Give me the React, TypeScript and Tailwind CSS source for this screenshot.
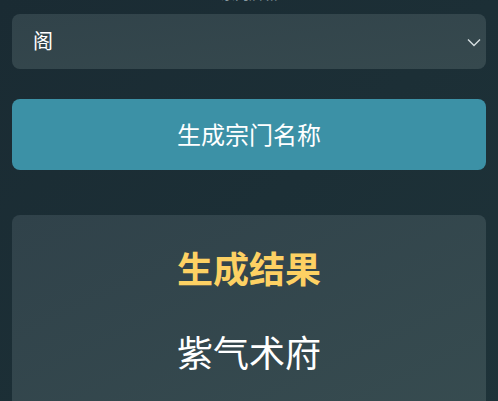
import { useState } from "react";

const options = ["宗", "门", "派", "阁", "殿", "府", "谷", "山"];

const App = () => {
  const [suffix, setSuffix] = useState("阁");

  return (
    <div
      className="min-h-screen bg-gradient-to-br from-[#1a2b33] to-[#1e3339] px-3 overflow-hidden"
      style={{ fontFamily: '"Noto Sans", "Noto Sans CJK SC", sans-serif' }}
    >
      {/* Suffix label (scrolled mostly out of view) */}
      <div className="-mt-[16px] h-5 text-center text-sm leading-5 text-[#8a9aa0]">
        宗门后缀
      </div>

      {/* Select */}
      <div className="relative mt-[10px]">
        <select
          value={suffix}
          onChange={(e) => setSuffix(e.target.value)}
          className="block h-[55px] w-full appearance-none rounded-lg bg-gradient-to-br from-[#31434a] to-[#36494e] pl-[21px] text-xl text-white outline-none"
        >
          {options.map((o) => (
            <option key={o} value={o}>
              {o}
            </option>
          ))}
        </select>
        <svg
          className="pointer-events-none absolute right-[5px] top-[38px] -translate-y-[14px]"
          width="14"
          height="9"
          viewBox="0 0 14 9"
          fill="none"
        >
          <path d="M1 1.5l6 6 6-6" stroke="#d5dde0" strokeWidth="1.4" />
        </svg>
      </div>

      {/* Generate button */}
      <button className="mt-[30px] flex h-[71px] w-full items-center justify-center rounded-lg bg-[#3c91a6] text-2xl text-white">
        生成宗门名称
      </button>

      {/* Result card */}
      <div className="mt-[45px] h-[220px] rounded-lg bg-gradient-to-br from-[#30424a] to-[#374c50] pt-[35px] text-center">
        <div className="text-4xl font-bold leading-10 text-[#fdd163]">生成结果</div>
        <div className="mt-[44px] text-4xl leading-10 text-white">紫气术府</div>
      </div>
    </div>
  );
};

export default App;
